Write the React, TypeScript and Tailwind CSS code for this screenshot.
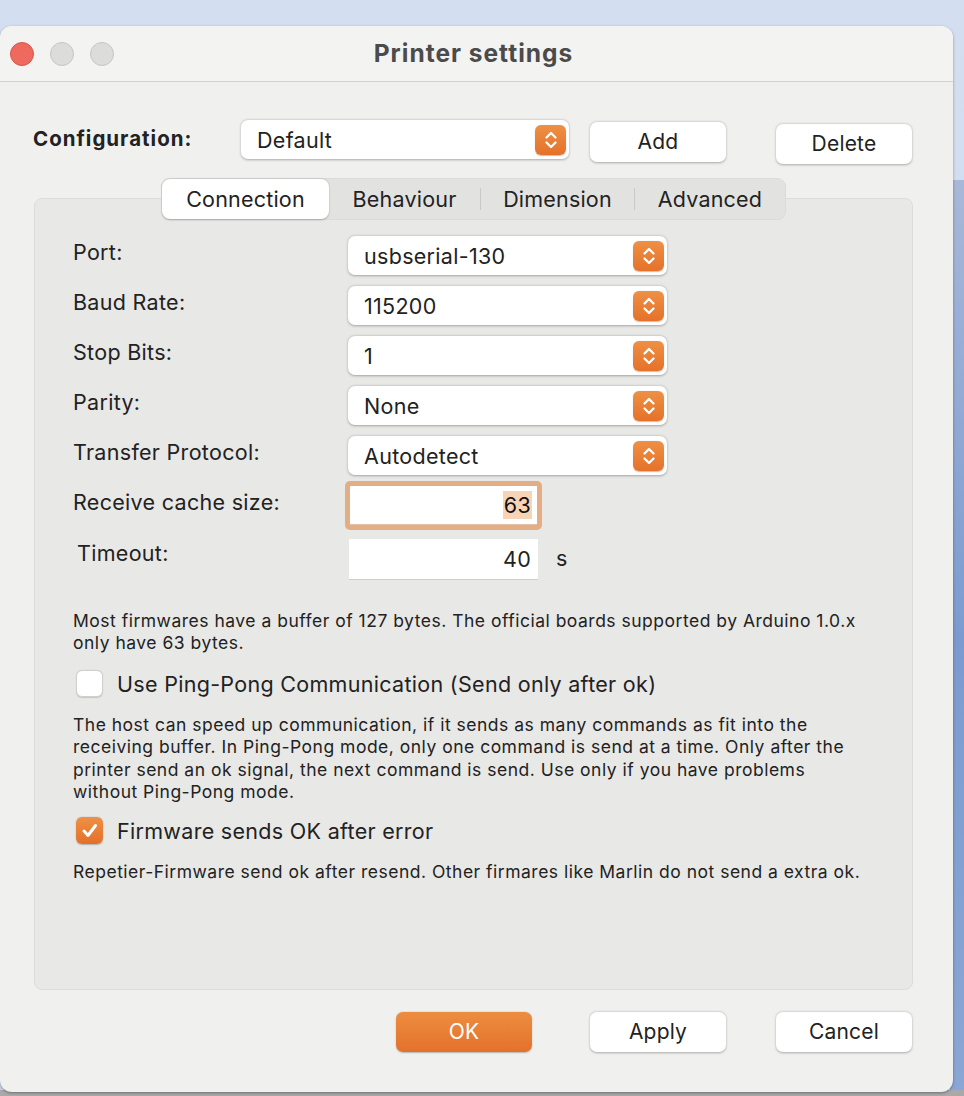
import React from 'react';

const FONT = { fontFamily: 'Inter, "Noto Sans", "Liberation Sans", sans-serif' };

// Orange up/down stepper on the right of a popup button
const Stepper = () => (
  <div className="flex h-[30px] w-[31px] items-center justify-center rounded-[6px] bg-gradient-to-b from-[#ee9044] to-[#e5712a] shadow-[0_0.5px_1px_rgba(0,0,0,0.25)]">
    <svg width="16" height="22" viewBox="0 0 16 22" fill="none" stroke="white" strokeWidth="2.3" strokeLinecap="round" strokeLinejoin="round">
      <path d="M3.5 8.5L8 4L12.5 8.5" />
      <path d="M3.5 13.5L8 18L12.5 13.5" />
    </svg>
  </div>
);

const Popup = ({ value, width = 'w-[319px]' }: { value: string; width?: string }) => (
  <div className={`${width} flex h-[39px] items-center justify-between rounded-[7px] bg-white pl-4 pr-[3px] shadow-[0_0.5px_2.5px_rgba(0,0,0,0.3)]`}>
    <span className="text-[21.5px] leading-[26px] tracking-[0.3px] text-[#222]">{value}</span>
    <Stepper />
  </div>
);

const PushButton = ({ label, primary = false }: { label: string; primary?: boolean }) => (
  <button
    type="button"
    className={
      primary
        ? 'flex h-[40px] w-[136px] items-center justify-center rounded-[7px] bg-gradient-to-b from-[#ec8d40] to-[#e4712b] text-[21px] tracking-[0.2px] text-white shadow-[0_0.5px_1.5px_rgba(0,0,0,0.25)]'
        : 'flex h-[40px] w-[136px] items-center justify-center rounded-[7px] bg-white text-[21px] tracking-[0.2px] text-[#222] shadow-[0_0.5px_2.5px_rgba(0,0,0,0.3)]'
    }
  >
    {label}
  </button>
);

const Checkbox = ({ checked }: { checked: boolean }) =>
  checked ? (
    <div className="flex h-[27px] w-[27px] items-center justify-center rounded-[6px] bg-gradient-to-b from-[#ee9044] to-[#e4702a] shadow-[0_0.5px_1.5px_rgba(0,0,0,0.25)]">
      <svg width="19" height="19" viewBox="0 0 19 19" fill="none" stroke="white" strokeWidth="3" strokeLinecap="round" strokeLinejoin="round">
        <path d="M4 10L8 14.5L15.5 4.5" />
      </svg>
    </div>
  ) : (
    <div className="h-[27px] w-[27px] rounded-[6px] border border-[#cfcfcf] bg-white shadow-[0_0.5px_1px_rgba(0,0,0,0.15)]" />
  );

const rows = [
  { label: 'Port:', value: 'usbserial-130' },
  { label: 'Baud Rate:', value: '115200' },
  { label: 'Stop Bits:', value: '1' },
  { label: 'Parity:', value: 'None' },
  { label: 'Transfer Protocol:', value: 'Autodetect' },
];

const tabs = [
  { name: 'Connection', w: 'w-[167px]' },
  { name: 'Behaviour', w: 'w-[151px]' },
  { name: 'Dimension', w: 'w-[153px]' },
  { name: 'Advanced', w: 'w-[150px]' },
];

const label = 'text-[21.5px] leading-[26px] tracking-[0.3px] text-[#222]';
const body = 'text-[17.5px] tracking-[0.5px] text-[#222]';

export default function App() {
  return (
    <div className="relative h-[1096px] w-[964px] overflow-hidden bg-gradient-to-b from-[#d3dff1] to-[#c9d6ec]" style={FONT}>
      {/* desktop behind the window */}
      <div className="absolute right-0 top-[180px] h-[916px] w-[14px] bg-gradient-to-b from-[#a8b8d8] via-[#7b9bd0] to-[#8aa6d4]" />
      <div className="absolute bottom-0 left-0 h-[6px] w-full bg-[#a9a9a9]" />

      {/* window */}
      <div className="relative mt-[26px] flex h-[1066px] w-[953px] flex-col overflow-hidden rounded-[12px] bg-[#f0f0ef] shadow-[0_1px_3px_rgba(0,0,0,0.35)]">
        {/* title bar */}
        <div className="relative flex h-[56px] shrink-0 items-center border-b border-[#d0d0cf] bg-[#f3f3f2]">
          <div className="flex items-center gap-[16px] pl-[10px]">
            <span className="h-[24px] w-[24px] rounded-full border border-[#d8564b] bg-[#ee6a5e]" />
            <span className="h-[24px] w-[24px] rounded-full border border-[#c6c6c6] bg-[#dcdcdb]" />
            <span className="h-[24px] w-[24px] rounded-full border border-[#c6c6c6] bg-[#dcdcdb]" />
          </div>
          <div className="pointer-events-none absolute inset-x-0 top-0 flex h-full items-center justify-center pr-[6px]">
            <span className="text-[24.5px] font-bold tracking-[1px] text-[#4b4b4b]">Printer settings</span>
          </div>
        </div>

        {/* configuration row */}
        <div className="flex items-start pl-[33px] pt-[38px]">
          <span className="mt-[4px] w-[208px] text-[20.5px] font-bold tracking-[1px] text-[#222]">Configuration:</span>
          <Popup value="Default" width="w-[328px]" />
          <div className="ml-[21px] mt-[2px]">
            <PushButton label="Add" />
          </div>
          <div className="ml-[50px] mt-[4px]">
            <PushButton label="Delete" />
          </div>
        </div>

        {/* tab view */}
        <div className="mt-[14px] flex flex-col pl-[34px] pr-[40px]">
          <div className="relative z-10 -mb-[22px] flex h-[42px] items-center self-center rounded-[9px] bg-[#e2e2e1] p-[1px] shadow-[inset_0_0_0_0.5px_rgba(0,0,0,0.06)]">
            {tabs.map((t, i) => (
              <div key={t.name} className="flex h-full items-center">
                {i > 1 && <span className="h-[22px] w-px bg-[#c9c9c9]" />}
                <div
                  className={
                    i === 0
                      ? `${t.w} flex h-[40px] items-center justify-center rounded-[8px] bg-white text-[21.5px] tracking-[0.2px] text-[#222] shadow-[0_0.5px_2px_rgba(0,0,0,0.25)]`
                      : `${t.w} flex h-[40px] items-center justify-center text-[21.5px] tracking-[0.2px] text-[#222]`
                  }
                >
                  {t.name}
                </div>
              </div>
            ))}
          </div>

          <div className="flex h-[792px] flex-col rounded-[8px] border border-[#dcdcdb] bg-[#e8e8e7] pl-[38px] pt-[37px]">
            <div className="flex flex-col gap-[11px]">
              {rows.map((r) => (
                <div key={r.label} className="flex items-center">
                  <span className={`${label} mb-[7px] w-[275px]`}>{r.label}</span>
                  <Popup value={r.value} />
                </div>
              ))}
            </div>

            <div className="mt-[6px] flex items-center">
              <span className={`${label} mb-[7px] w-[272px]`}>Receive cache size:</span>
              <div className="rounded-[5px] bg-[#e4ad84] p-[5px]">
                <div className="flex h-[39px] w-[187px] items-center justify-end border-b border-[#e0c0a8] bg-white pr-[5px]">
                  <span className="bg-[#f7d4b6] px-px text-[21.5px] leading-[28px] tracking-[0.3px] text-[#111]">63</span>
                </div>
              </div>
            </div>

            <div className="mt-[9px] flex items-center">
              <span className={`${label} mb-[14px] w-[272px] pl-[4px]`}>Timeout:</span>
              <div className="ml-[4px] flex h-[41px] w-[189px] items-center justify-end border-b border-[#cfcfcf] bg-white pr-[7px]">
                <span className={label}>40</span>
              </div>
              <span className={`${label} mb-[4px] ml-[18px]`}>s</span>
            </div>

            <p className={`${body} mt-[30px] leading-[22px]`}>
              Most firmwares have a buffer of 127 bytes. The official boards supported by Arduino 1.0.x
              <br />
              only have 63 bytes.
            </p>

            <div className="mt-[16px] flex items-center pl-[3px]">
              <Checkbox checked={false} />
              <span className={`${label} ml-[14px]`}>Use Ping-Pong Communication (Send only after ok)</span>
            </div>

            <p className={`${body} mt-[17px] leading-[22.3px]`}>
              The host can speed up communication, if it sends as many commands as fit into the
              <br />
              receiving buffer. In Ping-Pong mode, only one command is send at a time. Only after the
              <br />
              printer send an ok signal, the next command is send. Use only if you have problems
              <br />
              without Ping-Pong mode.
            </p>

            <div className="mt-[14px] flex items-center pl-[3px]">
              <Checkbox checked />
              <span className={`${label} ml-[14px]`}>Firmware sends OK after error</span>
            </div>

            <p className={`${body} mt-[17px] leading-[22px]`}>
              Repetier-Firmware send ok after resend. Other firmares like Marlin do not send a extra ok.
            </p>
          </div>
        </div>

        {/* dialog buttons */}
        <div className="mt-[22px] flex items-center pl-[396px]">
          <PushButton label="OK" primary />
          <div className="ml-[58px]">
            <PushButton label="Apply" />
          </div>
          <div className="ml-[50px]">
            <PushButton label="Cancel" />
          </div>
        </div>
      </div>
    </div>
  );
}
